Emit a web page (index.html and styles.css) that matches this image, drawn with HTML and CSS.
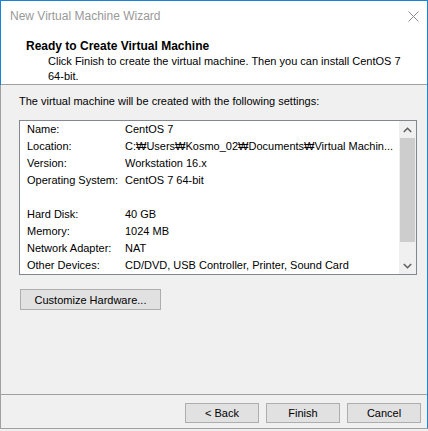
FILE: index.html
```html
<!DOCTYPE html>
<html lang="en">
<head>
  <meta charset="UTF-8">
  <title>New Virtual Machine Wizard</title>
  <link rel="stylesheet" href="styles.css">
</head>
<body>
  <div class="window">
    <div class="titlebar">
      <span class="title">New Virtual Machine Wizard</span>
      <svg class="close" width="11" height="11" viewBox="0 0 11 11">
        <path d="M0.5 0.5 L10.5 10.5 M10.5 0.5 L0.5 10.5" stroke="#8c8c8c" stroke-width="1" fill="none"/>
      </svg>
    </div>

    <div class="header">
      <div class="header-title">Ready to Create Virtual Machine</div>
      <div class="header-desc">Click Finish to create the virtual machine. Then you can install CentOS 7 64-bit.</div>
    </div>

    <div class="content">
      <p class="intro">The virtual machine will be created with the following settings:</p>

      <div class="listbox">
        <div class="rows">
          <div class="row"><span class="key">Name:</span><span class="val">CentOS 7</span></div>
          <div class="row"><span class="key">Location:</span><span class="val">C:₩Users₩Kosmo_02₩Documents₩Virtual Machin...</span></div>
          <div class="row"><span class="key">Version:</span><span class="val">Workstation 16.x</span></div>
          <div class="row"><span class="key">Operating System:</span><span class="val">CentOS 7 64-bit</span></div>
          <div class="row"></div>
          <div class="row"><span class="key">Hard Disk:</span><span class="val">40 GB</span></div>
          <div class="row"><span class="key">Memory:</span><span class="val">1024 MB</span></div>
          <div class="row"><span class="key">Network Adapter:</span><span class="val">NAT</span></div>
          <div class="row"><span class="key">Other Devices:</span><span class="val">CD/DVD, USB Controller, Printer, Sound Card</span></div>
        </div>
        <div class="scrollbar">
          <div class="arrow">
            <svg width="9" height="6" viewBox="0 0 9 6"><path d="M0.8 5 L4.5 1.3 L8.2 5" stroke="#606060" stroke-width="1.6" fill="none"/></svg>
          </div>
          <div class="track"><div class="thumb"></div></div>
          <div class="arrow">
            <svg width="9" height="6" viewBox="0 0 9 6"><path d="M0.8 1 L4.5 4.7 L8.2 1" stroke="#606060" stroke-width="1.6" fill="none"/></svg>
          </div>
        </div>
      </div>

      <button class="btn customize">Customize Hardware...</button>
    </div>

    <div class="footer">
      <button class="btn">&lt; Back</button>
      <button class="btn">Finish</button>
      <button class="btn">Cancel</button>
    </div>
  </div>
</body>
</html>
```

FILE: styles.css
```css
body, html {
  margin: 0;
  padding: 0;
  background-color: #f0f0f0;
  font-family: "Segoe UI", "Liberation Sans", Arial, sans-serif;
  font-size: 11px;
  color: #000;
}

.window {
  box-sizing: border-box;
  width: 428px;
  height: 429px;
  display: flex;
  flex-direction: column;
  border: 1px solid #1883d7;
  border-left: 0;
  border-bottom-color: #a0a0a0;
  padding-left: 1px;
  /* linke Kante: oben blau, unten grau */
  background: linear-gradient(#1883d7 0 84px, #a0a0a0 84px) left top / 1px 100% no-repeat, #f0f0f0;
}

.titlebar {
  height: 30px;
  flex-shrink: 0;
  display: flex;
  align-items: center;
  justify-content: space-between;
  padding: 0 8px 0 9px;
  background-color: #fff;
}

.title {
  font-size: 12px;
  color: #999;
}

.close {
  margin-top: 1px;
}

.header {
  background-color: #fff;
  padding: 8px 0 0 0;
  border-bottom: 1px solid #a0a0a0;
}

.header-title {
  font-size: 12px;
  font-weight: bold;
  line-height: 15px;
  padding-left: 25px;
}

.header-desc {
  line-height: 15px;
  padding-left: 47px;
  width: 360px;
}

.content {
  flex: 1;
  padding: 9px 0 0 18px;
}

.intro {
  margin: 0;
  line-height: 15px;
}

.listbox {
  display: flex;
  width: 398px;
  height: 155px;
  box-sizing: border-box;
  margin-top: 11px;
  border: 1px solid #828790;
  background-color: #fff;
}

.rows {
  flex: 1;
  padding-left: 7px;
}

.row {
  display: flex;
  height: 17px;
  line-height: 17px;
  white-space: nowrap;
}

.key {
  width: 98px;
  flex-shrink: 0;
}

.scrollbar {
  width: 17px;
  display: flex;
  flex-direction: column;
  background-color: #f0f0f0;
}

.arrow {
  height: 17px;
  display: flex;
  align-items: center;
  justify-content: center;
}

.track {
  flex: 1;
  padding: 0 1px;
}

.thumb {
  height: 104px;
  background-color: #cdcdcd;
}

.btn {
  font-family: inherit;
  font-size: 11px;
  color: #000;
  background-color: #e1e1e1;
  border: 1px solid #adadad;
  border-radius: 0;
  padding: 0;
  margin: 0;
  cursor: pointer;
}

.btn:hover {
  background-color: #e5f1fb;
  border-color: #0078d7;
}

.customize {
  display: block;
  width: 141px;
  height: 21px;
  margin: 14px 0 0 1px;
}

.footer {
  display: flex;
  justify-content: flex-end;
  gap: 7px;
  border-top: 1px solid #a0a0a0;
  padding: 8px 6px 5px 0;
}

.footer .btn {
  width: 74px;
  height: 20px;
}
```
